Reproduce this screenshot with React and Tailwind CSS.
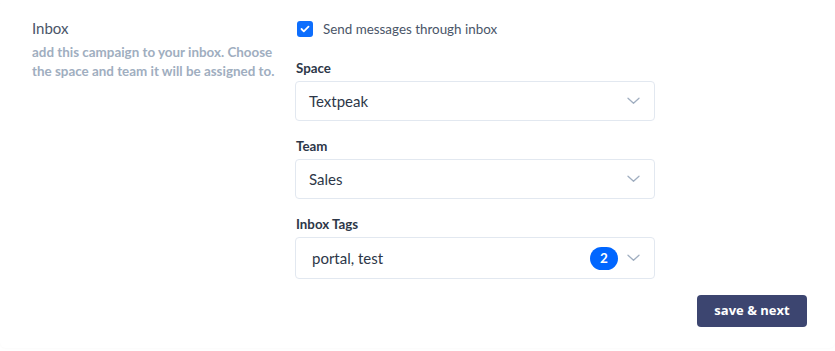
import React from "react";

function Chevron() {
  return (
    <svg width="13" height="8" viewBox="0 0 13 8" fill="none" className="shrink-0">
      <path d="M1 1.2l5.5 5L12 1.2" stroke="#a0aec0" strokeWidth="1.3" strokeLinecap="round" strokeLinejoin="round" />
    </svg>
  );
}

function Select({ value, badge, tall }) {
  return (
    <div
      className={`flex items-center w-[360px] ${tall ? "h-[42px] pl-[16px]" : "h-[40px] pl-[13px]"} pr-[14px] border border-[#e2e8f0] rounded-[4px] bg-white`}
    >
      <span className="flex-1 text-[15px] leading-[24px] text-[#2d3748]">{value}</span>
      {badge && (
        <span className="flex items-center justify-center w-[28px] h-[23px] rounded-full bg-[#0066ff] text-white text-[13.5px] font-bold mr-[9px]">
          {badge}
        </span>
      )}
      <Chevron />
    </div>
  );
}

function Field({ label, children }) {
  return (
    <div className="flex flex-col">
      <div className="text-[13.3px] leading-[20px] font-bold text-[#2d3748] mb-[3px] pl-[1px]">{label}</div>
      {children}
    </div>
  );
}

export default function App() {
  return (
    <div
      className="w-[835px] h-[351px] bg-white overflow-hidden"
      style={{ fontFamily: "Lato, 'Noto Sans', sans-serif" }}
    >
      <div className="w-[835px] h-[348px] bg-white rounded-[6px] shadow-[0_1px_2px_rgba(0,0,0,0.02)] flex flex-col pr-[28px]">
        <div className="flex">
          <div className="w-[295px] pl-[32px] pt-[16px]">
            <div className="text-[15px] leading-[24px] text-[#4a5568]">Inbox</div>
            <div className="text-[13.4px] leading-[19px] font-bold text-[#a0aec0] mt-[3px] w-[258px]">
              add this campaign to your inbox. Choose the space and team it will be assigned to.
            </div>
          </div>
          <div className="flex flex-col pt-[19px]">
            <div className="flex items-center h-[20px] pl-[2px]">
              <span className="flex items-center justify-center w-[16px] h-[16px] rounded-[3px] bg-[#0d6efd]">
                <svg width="10" height="8" viewBox="0 0 10 8" fill="none">
                  <path d="M1.5 4l2.3 2.3L8.5 1.7" stroke="white" strokeWidth="1.8" strokeLinecap="round" strokeLinejoin="round" />
                </svg>
              </span>
              <span className="ml-[10px] text-[13.4px] leading-[20px] text-[#4a5568]">Send messages through inbox</span>
            </div>
            <div className="mt-[19px] flex flex-col gap-[15px]">
              <Field label="Space">
                <Select value="Textpeak" />
              </Field>
              <Field label="Team">
                <Select value="Sales" />
              </Field>
              <Field label="Inbox Tags">
                <Select value="portal, test" badge="2" tall />
              </Field>
            </div>
          </div>
        </div>
        <div className="flex justify-end mt-[16px]">
          <button
            className="w-[110px] h-[32px] rounded-[4px] bg-[#3c4570] text-white text-[13px] font-bold"
            style={{ fontFamily: "'Open Sans', sans-serif" }}
          >
            save &amp; next
          </button>
        </div>
      </div>
    </div>
  );
}
